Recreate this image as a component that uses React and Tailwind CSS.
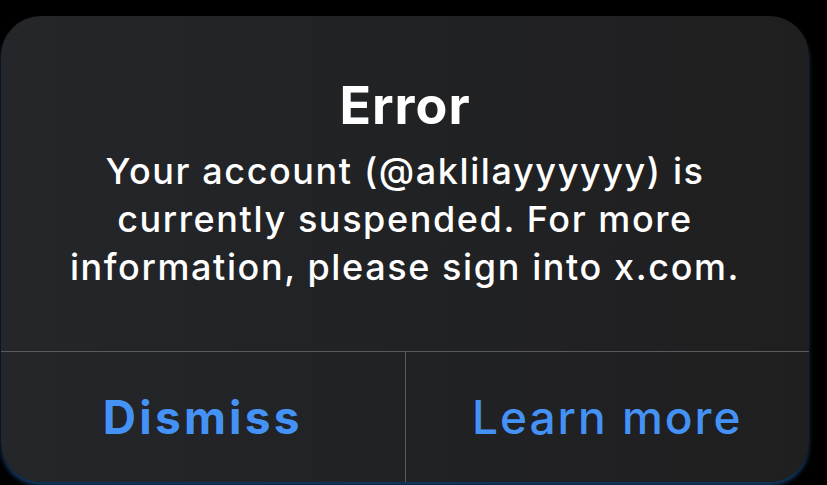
export default function App() {
  return (
    <div
      className="w-[827px] h-[485px] bg-black overflow-hidden"
      style={{ fontFamily: "Inter, 'Noto Sans', sans-serif" }}
    >
      <div className="ml-[1px] mt-[16px] w-[808px] h-[466px] rounded-[40px] bg-gradient-to-r from-[#24262a] via-[#212224] to-[#1f1f20] flex flex-col overflow-hidden shadow-[0_4px_4px_rgba(40,110,190,0.5)]">
        {/* message */}
        <div className="flex flex-col items-center pt-[60px] pb-[60px] text-white text-center">
          <h1 className="text-[52px] leading-[60px] font-bold tracking-[1px]">Error</h1>
          <p className="mt-[11px] text-[36px] leading-[48px] font-medium tracking-[1.6px] whitespace-nowrap">
            Your account (@aklilayyyyyy) is
            <br />
            currently suspended. For more
            <br />
            information, please sign into x.com.
          </p>
        </div>

        {/* actions */}
        <div className="flex flex-1 border-t border-[#5a5a5c]">
          <button className="flex-1 flex items-center justify-center text-[46px] font-bold text-[#4592f7] tracking-[3.2px]">
            Dismiss
          </button>
          <div className="w-px bg-[#5a5a5c]" />
          <button className="flex-1 flex items-center justify-center text-[46px] font-medium text-[#4592f7] tracking-[2px]">
            Learn more
          </button>
        </div>
      </div>
    </div>
  );
}
